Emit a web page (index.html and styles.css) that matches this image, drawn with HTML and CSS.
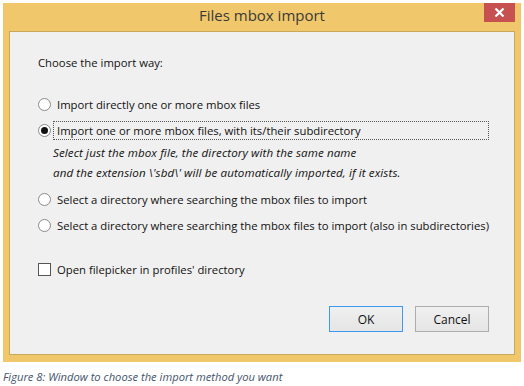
FILE: index.html
```html
<!DOCTYPE html>
<html lang="en">
<head>
    <meta charset="UTF-8">
    <title>Files mbox import</title>
    <link rel="stylesheet" href="styles.css">
</head>
<body>
    <div class="window">
        <div class="titlebar">
            <div class="title">Files mbox import</div>
            <div class="close">
                <svg width="11" height="9" viewBox="0 0 11 9"><path d="M1.5 0.5 L9.5 8.5 M9.5 0.5 L1.5 8.5" stroke="#fff" stroke-width="2.2"/></svg>
            </div>
        </div>
        <div class="content">
            <div class="intro">Choose the import way:</div>

            <div class="option">
                <span class="radio"></span>
                <span class="label">Import directly one or more mbox files</span>
            </div>
            <div class="option">
                <span class="radio checked"></span>
                <span class="label focused">Import one or more mbox files, with its/their subdirectory</span>
            </div>
            <div class="notes">
                <div class="note">Select just the mbox file, the directory with the same name</div>
                <div class="note">and the extension \'sbd\' will be automatically imported, if it exists.</div>
            </div>
            <div class="option">
                <span class="radio"></span>
                <span class="label">Select a directory where searching the mbox files to import</span>
            </div>
            <div class="option">
                <span class="radio"></span>
                <span class="label">Select a directory where searching the mbox files to import (also in subdirectories)</span>
            </div>

            <div class="option check-row">
                <span class="checkbox"></span>
                <span class="label">Open filepicker in profiles' directory</span>
            </div>

            <div class="buttons">
                <button class="btn default">OK</button>
                <button class="btn">Cancel</button>
            </div>
        </div>
    </div>
    <div class="caption">Figure 8: Window to choose the import method you want</div>
</body>
</html>
```

FILE: styles.css
```css
body {
    margin: 0;
    background: #fff;
    font-family: 'Open Sans', 'Noto Sans', sans-serif;
}

.window {
    margin: 3px 0 0 3px;
    width: 518px;
    height: 359px;
    background: #f0c76a;
    display: flex;
    flex-direction: column;
    box-sizing: border-box;
    padding: 0 6px 7px 6px;
}

.titlebar {
    height: 28px;
    display: flex;
    position: relative;
    justify-content: center;
}

.title {
    font-family: 'Open Sans', sans-serif;
    font-size: 15px;
    color: #3a3a3a;
    line-height: 25px;
}

.close {
    position: absolute;
    right: 0;
    top: 0;
    width: 31px;
    height: 19px;
    background: #c75050;
    display: flex;
    justify-content: center;
    align-items: center;
}

.content {
    flex: 1;
    background: #f0f0f0;
    border: 1px solid #c9a85c;
    padding: 20px 0 0 28px;
    font-size: 11.3px;
    color: #111;
}

.intro {
    line-height: 22px;
    margin-bottom: 17px;
}

.option {
    display: flex;
    align-items: center;
    height: 26px;
}

.radio {
    width: 11px;
    height: 11px;
    border: 1px solid #8a8a8a;
    border-radius: 50%;
    background: #fff;
    margin-right: 2px;
    position: relative;
    flex-shrink: 0;
}

.radio.checked::after {
    content: '';
    position: absolute;
    left: 2px;
    top: 2px;
    width: 7px;
    height: 7px;
    border-radius: 50%;
    background: #111;
}

.label {
    padding: 1px 3px;
    border: 1px dotted transparent;
}

.label.focused {
    border-color: #555;
    width: 428px;
}

.notes {
    padding: 0 0 3px 15px;
}

.note {
    font-style: italic;
    line-height: 20px;
    font-size: 11.6px;
    letter-spacing: 0.1px;
}

.check-row {
    margin-top: 18px;
}

.checkbox {
    width: 11px;
    height: 11px;
    border: 1px solid #555;
    background: #fff;
    margin-right: 2px;
    flex-shrink: 0;
}

.checkbox + .label {
    border: none;
    padding-left: 4px;
}

.buttons {
    display: flex;
    justify-content: flex-end;
    gap: 12px;
    margin-top: 24px;
    padding-right: 25px;
}

.btn {
    width: 74px;
    height: 26px;
    font-family: 'Open Sans', sans-serif;
    font-size: 12px;
    color: #111;
    background: linear-gradient(#f0f0f0, #e5e5e5);
    border: 1px solid #adadad;
    padding: 0;
}

.btn.default {
    border-color: #3c9af0;
}

.caption {
    margin: 7px 0 0 3px;
    font-style: italic;
    font-size: 11.2px;
    color: #44546a;
}
```
